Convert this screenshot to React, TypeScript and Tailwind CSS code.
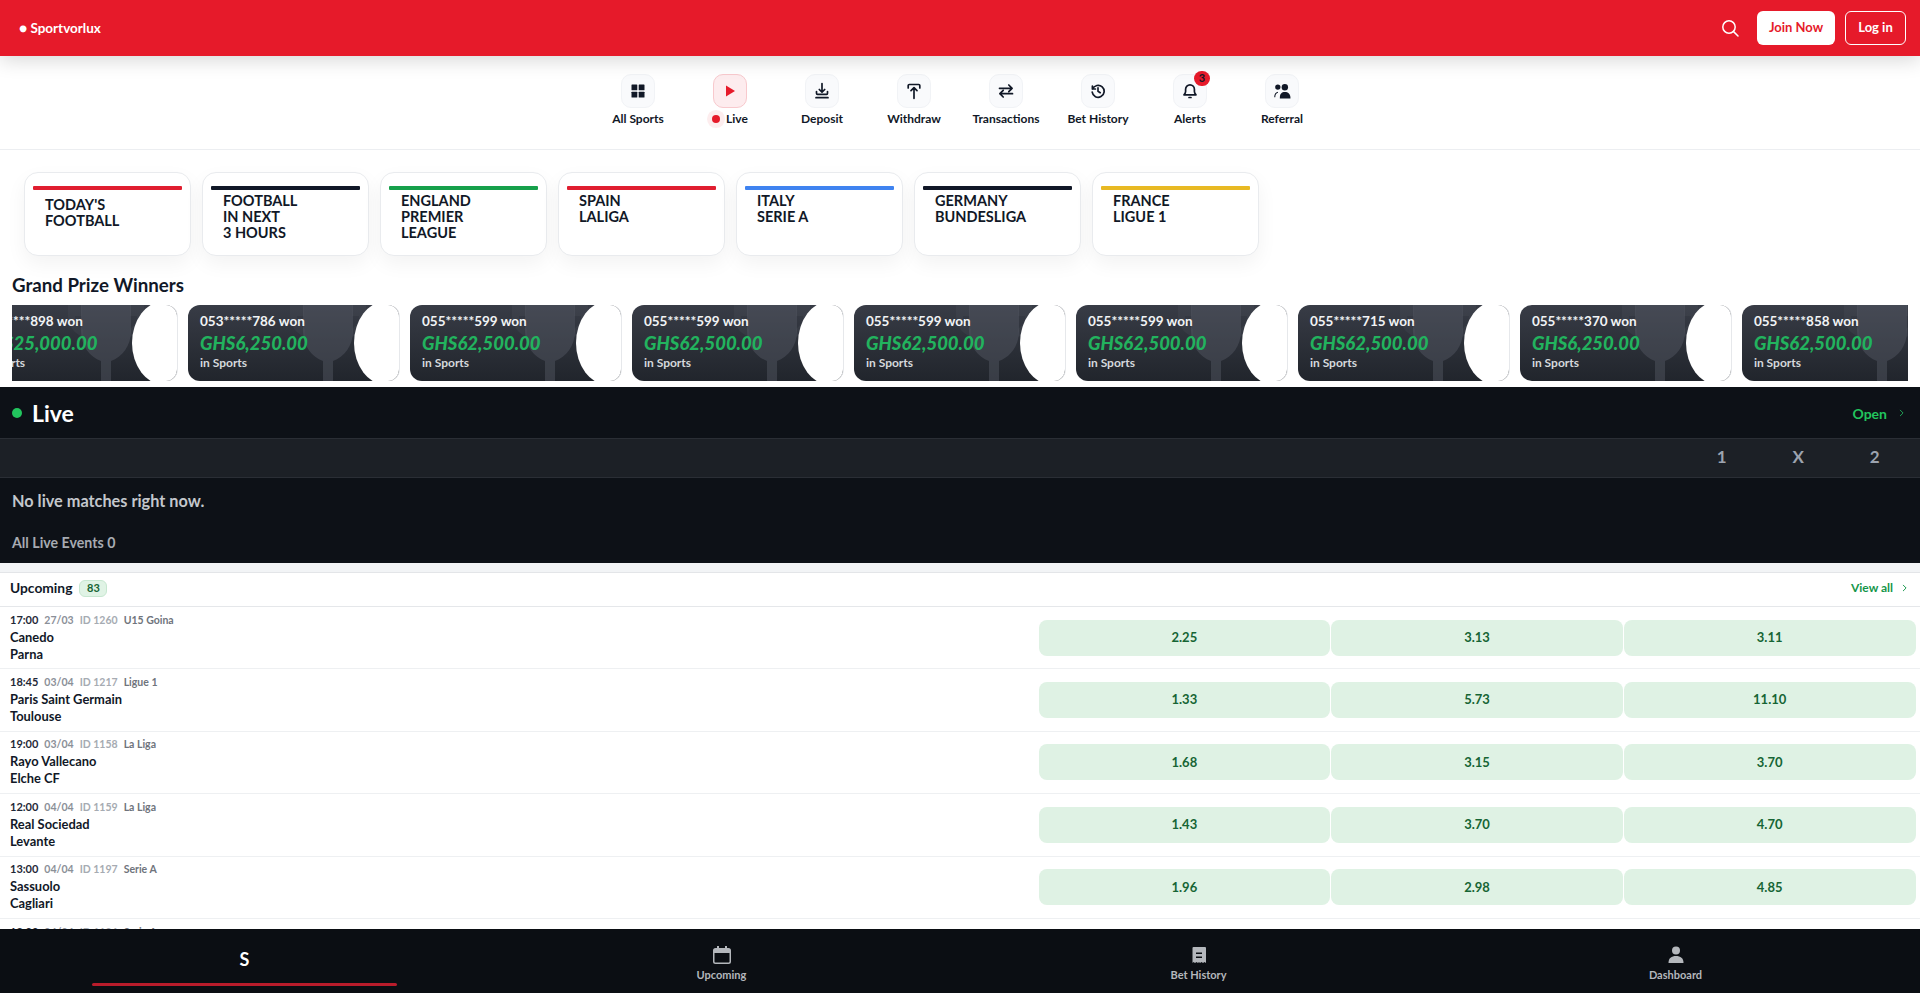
import React from "react";

const font = { fontFamily: "Lato, 'Noto Sans', sans-serif" };

function Grid() {
  return (
    <svg width="14" height="14" viewBox="0 0 14 14" fill="#111827">
      <rect x="0.5" y="0.5" width="5.8" height="5.8" rx="0.6" />
      <rect x="7.7" y="0.5" width="5.8" height="5.8" rx="0.6" />
      <rect x="0.5" y="7.7" width="5.8" height="5.8" rx="0.6" />
      <rect x="7.7" y="7.7" width="5.8" height="5.8" rx="0.6" />
    </svg>
  );
}
function Play() {
  return (
    <svg width="14" height="14" viewBox="0 0 14 14" fill="#e61a2a">
      <path d="M3 1.500v11L12 7z" />
    </svg>
  );
}
const stroke = { fill: "none", stroke: "#111827", strokeWidth: 1.7, strokeLinecap: "round" as const, strokeLinejoin: "round" as const };
function Deposit() {
  return (
    <svg width="18" height="18" viewBox="0 0 18 18" {...stroke}>
      <path d="M9 1.500v8.500M6.300 7.500 9 10.200 11.700 7.500M3.500 9.500v1.700c0 .6.500 1.100 1.100 1.100h9c.6 0 .9-.5.900-1.100V9.500M3 15.700h12" />
    </svg>
  );
}
function Withdraw() {
  return (
    <svg width="18" height="18" viewBox="0 0 18 18" {...stroke}>
      <path d="M3.200 6V3.600c0-.6.500-1.100 1.100-1.100h9.400c.6 0 1.100.5 1.100 1.100V6M9 16.300V5.800M6 8.600 9 5.600l3 3" />
    </svg>
  );
}
function Swap() {
  return (
    <svg width="18" height="18" viewBox="0 0 18 18" {...stroke}>
      <path d="M2.500 6.300h12.600M11.800 3l3.300 3.300-3.300 3.300M15.500 11.700H2.900M6.200 8.400l-3.300 3.300 3.300 3.300" />
    </svg>
  );
}
function History() {
  return (
    <svg width="16" height="16" viewBox="0 0 16 16" {...stroke}>
      <path d="M2.400 3v3h3M2.600 6a6 6 0 1 1-.4 3.200M8 4.800V8.300l2.200 1.400" />
    </svg>
  );
}
function Bell() {
  return (
    <svg width="14" height="16" viewBox="0 0 14 16" {...stroke}>
      <path d="M1 11.800h12c-1-1-1.600-1.600-1.600-3.200V6.200a4.400 4.400 0 0 0-8.800 0v2.400c0 1.600-.6 2.200-1.600 3.200z" />
      <path d="M6 14.500h2" />
    </svg>
  );
}
function People() {
  return (
    <svg className="ml-[1px]" width="17" height="15" viewBox="0 0 16 14" fill="#111827">
      <circle cx="3.600" cy="2.800" r="2.500" />
      <circle cx="10.200" cy="3" r="3" />
      <path d="M5.500 13.500c-.2-4.500 1.800-6 4.700-6 3 0 5.300 1.600 5.300 6z" />
      <path d="M0.700 12.500c0-2.500.9-4.200 3-4.700" fill="none" stroke="#111827" strokeWidth="1" />
    </svg>
  );
}

const navItems = [
  { label: "All Sports", icon: <Grid /> },
  { label: "Live", icon: <Play />, live: true },
  { label: "Deposit", icon: <Deposit /> },
  { label: "Withdraw", icon: <Withdraw /> },
  { label: "Transactions", icon: <Swap /> },
  { label: "Bet History", icon: <History /> },
  { label: "Alerts", icon: <Bell />, badge: "3" },
  { label: "Referral", icon: <People /> },
];

const cards = [
  { lines: ["TODAY'S", "FOOTBALL"], bar: "bg-[#e01e30]", first: true },
  { lines: ["FOOTBALL", "IN NEXT", "3 HOURS"], bar: "bg-[#111827]" },
  { lines: ["ENGLAND", "PREMIER", "LEAGUE"], bar: "bg-[#16a04b]" },
  { lines: ["SPAIN", "LALIGA"], bar: "bg-[#e01e30]" },
  { lines: ["ITALY", "SERIE A"], bar: "bg-[#3f83f0]" },
  { lines: ["GERMANY", "BUNDESLIGA"], bar: "bg-[#111827]" },
  { lines: ["FRANCE", "LIGUE 1"], bar: "bg-[#e8b923]" },
];

const winners = [
  ["055*****898 won", "GHS25,000.00"],
  ["053*****786 won", "GHS6,250.00"],
  ["055*****599 won", "GHS62,500.00"],
  ["055*****599 won", "GHS62,500.00"],
  ["055*****599 won", "GHS62,500.00"],
  ["055*****599 won", "GHS62,500.00"],
  ["055*****715 won", "GHS62,500.00"],
  ["055*****370 won", "GHS6,250.00"],
  ["055*****858 won", "GHS62,500.00"],
];

const matches = [
  ["17:00", "27/03", "ID 1260", "U15 Goina", "Canedo", "Parna", "2.25", "3.13", "3.11"],
  ["18:45", "03/04", "ID 1217", "Ligue 1", "Paris Saint Germain", "Toulouse", "1.33", "5.73", "11.10"],
  ["19:00", "03/04", "ID 1158", "La Liga", "Rayo Vallecano", "Elche CF", "1.68", "3.15", "3.70"],
  ["12:00", "04/04", "ID 1159", "La Liga", "Real Sociedad", "Levante", "1.43", "3.70", "4.70"],
  ["13:00", "04/04", "ID 1197", "Serie A", "Sassuolo", "Cagliari", "1.96", "2.98", "4.85"],
  ["18:00", "04/04", "ID 1196", "Serie A", "Modena", "Parma", "1.96", "2.98", "4.85"],
];

function Trophy() {
  return (
    <svg className="absolute left-[102px] top-0 h-[76px] w-[76px]" viewBox="0 0 76 76">
      <path fill="#565b66" fillOpacity="0.2" d="M0 0h14v11H7v6l8 7v8C5 28 0 20 0 10zM76 0H62v11h7v6l-7 7v8c10-4 14-12 14-22z" />
      <path fill="#565b66" fillOpacity="0.45" d="M13 0h50v26c0 15-9 26-20 30v20H33V56C22 52 13 41 13 26z" />
    </svg>
  );
}

function Chevron({ className }: { className: string }) {
  return (
    <svg className={className} width="5" height="8" viewBox="0 0 6 10" fill="none" stroke="currentColor" strokeWidth="1.200" strokeLinecap="round" strokeLinejoin="round">
      <path d="M1.500 1.500 5 5 1.500 8.500" />
    </svg>
  );
}

export default function App() {
  return (
    <div style={font} className="relative h-[993px] w-full overflow-hidden bg-white text-[#111827]">
      <header className="relative z-10 flex h-14 items-center justify-between bg-[#e61a2a] pl-[19px] pr-[14px] shadow-[0_4px_20px_rgba(0,0,0,0.16)]">
        <div className="text-[13.500px] font-bold text-white">● Sportvorlux</div>
        <div className="flex items-center">
          <svg className="mr-[18px]" width="18" height="18" viewBox="0 0 18 18" fill="none" stroke="#fff" strokeWidth="1.500" strokeLinecap="round">
            <circle cx="8" cy="8" r="6.200" />
            <path d="M12.600 12.600 17 17" />
          </svg>
          <button className="h-[34px] w-[78px] rounded-[6px] bg-white text-[13px] font-bold text-[#e61a2a]">Join Now</button>
          <button className="ml-[10px] h-[34px] w-[61px] rounded-[6px] border border-white text-[13px] font-bold text-white">Log in</button>
        </div>
      </header>

      <nav className="flex h-[94px] justify-center border-b border-[#eceef1] pt-[18px]">
        {navItems.map((n) => (
          <div key={n.label} className="flex w-[92px] flex-col items-center">
            <div className={`relative flex h-[34px] w-[34px] items-center justify-center rounded-[10px] border ${n.live ? "border-[#f8c9cd] bg-[#fdecee]" : "border-[#f1f3f6] bg-[#f9fafc]"}`}>
              {n.icon}
              {n.badge && (
                <span className="absolute right-[-4px] top-[-4px] flex h-[15px] w-[16px] items-center justify-center rounded-full bg-[#e61a2a] text-[11px] font-bold text-[#111827]">{n.badge}</span>
              )}
            </div>
            <div className="mt-[3px] flex h-[16px] items-center text-[12px] font-bold leading-4">
              {n.live && <span className="mr-[6px] h-[8px] w-[8px] rounded-full bg-[#e61a2a] shadow-[0_0_0_5px_rgba(230,26,42,0.08)]" />}
              {n.label}
            </div>
          </div>
        ))}
      </nav>

      <section className="flex h-[118px] gap-[11px] pl-[24px] pt-[22px]">
        {cards.map((c) => (
          <div key={c.lines[0]} className="h-[84px] w-[167px] rounded-[14px] border border-[#e9ebee] bg-white px-[8px] pt-[13px] shadow-[0_8px_20px_rgba(0,0,0,0.05)]">
            <div className={`h-[4px] rounded-[1px] ${c.bar}`} />
            <div className={`pl-[12px] text-[14.500px] font-bold leading-4 ${c.first ? "pt-[7px]" : "pt-[3px]"}`}>
              {c.lines.map((l) => <div key={l}>{l}</div>)}
            </div>
          </div>
        ))}
      </section>

      <h2 className="pl-[12px] pt-[5px] text-[18.700px] font-bold leading-[24px]">Grand Prize Winners</h2>

      <div className="mx-[12px] mt-[8px] h-[76px] overflow-hidden">
        <div className="ml-[-46px] flex gap-[10.200px]">
          {winners.map((w, i) => (
            <div key={i} className="relative h-[76px] w-[211.800px] shrink-0 overflow-hidden rounded-[12px] border-r border-[#e6e8eb] bg-gradient-to-b from-[#383c46] to-[#21252c] pl-[12px]">
              <Trophy />
              <div className="absolute right-[-20px] top-[-4px] h-[84px] w-[65px] rounded-[50%] bg-white" />
              <div className="relative pt-[8px] text-[13.500px] font-bold leading-[16px] text-[#f1f3f5]">{w[0]}</div>
              <div className="relative mt-[1px] text-[18.500px] font-black italic leading-[26px] text-[#22b35e]">{w[1]}</div>
              <div className="relative text-[12px] font-bold leading-[14px] text-[#d5d8dc]">in Sports</div>
            </div>
          ))}
        </div>
      </div>

      <section className="mt-[6px] h-[176px] bg-[#0d1117]">
        <div className="flex h-[51px] items-center justify-between pl-[12px] pr-[16px] pt-[1px]">
          <div className="flex items-center gap-[10px]">
            <span className="h-[10px] w-[10px] rounded-full bg-[#22c55e]" />
            <span className="text-[23px] font-bold text-white">Live</span>
          </div>
          <div className="flex items-center gap-[12px] text-[#22c55e]">
            <span className="text-[14px] font-bold">Open</span>
            <Chevron className="text-[#22a558]" />
          </div>
        </div>
        <div className="flex h-[40px] items-center justify-end border-y border-[#2a2e35] bg-[#1c2026] pb-[3px] pr-[7px] text-[17px] font-bold text-[#9ca3af]">
          <span className="w-[76.500px] text-center">1</span>
          <span className="w-[76.500px] text-center">X</span>
          <span className="w-[76.500px] text-center">2</span>
        </div>
        <div className="pl-[12px] pt-[12px] text-[16.300px] font-bold leading-[22px] text-[#c3c7cc]">No live matches right now.</div>
        <div className="pl-[12px] pt-[21px] text-[14.200px] font-bold leading-[20px] text-[#a7abb2]">All Live Events 0</div>
      </section>

      <div className="h-[10px] border-b border-[#e3e5e8] bg-[#f2f4f6]" />

      <div className="flex h-[34px] items-center justify-between border-b border-[#e5e7ea] pb-[3px] pl-[10px] pr-[13px]">
        <div className="flex items-center">
          <span className="text-[13.800px] font-bold">Upcoming</span>
          <span className="ml-[7px] flex h-[17px] w-[28px] items-center justify-center rounded-[6px] border border-[#c7e7d0] bg-[#e0f3e5] text-[11px] font-bold text-[#166534]">83</span>
        </div>
        <div className="flex items-center gap-[9px] text-[#15964a]">
          <span className="text-[12px] font-bold">View all</span>
          <Chevron className="" />
        </div>
      </div>

      {matches.map((m) => (
        <div key={m[2]} className="flex h-[62.400px] items-center justify-between border-b border-[#eef0f2] pl-[10px] pr-[4.500px]">
          <div>
            <div className="flex items-baseline gap-[6px] text-[10.500px] font-bold leading-[14px]">
              <span className="text-[11px] text-[#1f2937]">{m[0]}</span>
              <span className="text-[#8b9098]">{m[1]}</span>
              <span className="text-[#a6abb2]">{m[2]}</span>
              <span className="text-[#6f747c]">{m[3]}</span>
            </div>
            <div className="mt-[2px] text-[12.900px] font-bold leading-[17px] text-[#111827]">{m[4]}</div>
            <div className="text-[12.900px] font-bold leading-[17px] text-[#111827]">{m[5]}</div>
          </div>
          <div className="flex w-[877px] gap-[1px]">
            {m.slice(6).map((o, i) => (
              <div key={i} className="flex h-[36px] flex-1 items-center justify-center rounded-[8px] bg-[#dff2e4] text-[13px] font-bold text-[#166534]">{o}</div>
            ))}
          </div>
        </div>
      ))}

      <footer className="absolute bottom-0 left-0 right-0 flex h-[64px] bg-[#0b0e13] px-[6px]">
        <div className="relative flex flex-1 items-center justify-center">
          <span className="mt-[-3px] text-[18px] font-bold text-white">S</span>
          <span className="absolute bottom-[7px] left-[86px] h-[3px] w-[305px] rounded-full bg-[#b91c2b]" />
        </div>
        <div className="flex flex-1 flex-col items-center gap-[4px] pt-[17px] text-[11px] font-bold leading-[14px] text-[#b4b7bc]">
          <svg width="18" height="18" viewBox="0 0 18 18" fill="#b4b7bc"><path d="M4 0h2v2h6V0h2v2h1.500A2.500 2.500 0 0 1 18 4.500v11a2.500 2.500 0 0 1-2.500 2.500h-13A2.500 2.500 0 0 1 0 15.500v-11A2.500 2.500 0 0 1 2.500 2H4zM1.500 7v8.500c0 .6.400 1 1 1h13c.6 0 1-.4 1-1V7z" /></svg>
          <span>Upcoming</span>
        </div>
        <div className="flex flex-1 flex-col items-center gap-[4px] pt-[17px] text-[11px] font-bold leading-[14px] text-[#b4b7bc]">
          <svg width="18" height="18" viewBox="0 0 18 18" fill="#b4b7bc"><path fillRule="evenodd" d="M3 1h12a1 1 0 0 1 1 1v15l-1.500-1-1.500 1-1.500-1-1.500 1-1-1-1 1-1.500-1-1.500 1-1.500-1-1 1V2a1 1 0 0 1 1-1zm3 5.500v1.500h6V6.500zm0 4v1.500h6v-1.500z" /></svg>
          <span>Bet History</span>
        </div>
        <div className="flex flex-1 flex-col items-center gap-[4px] pt-[17px] text-[11px] font-bold leading-[14px] text-[#b4b7bc]">
          <svg width="18" height="18" viewBox="0 0 18 18" fill="#b4b7bc"><circle cx="9" cy="4.500" r="4" /><path d="M1.500 17c0-5 3-7 7.500-7s7.500 2 7.500 7z" /></svg>
          <span>Dashboard</span>
        </div>
      </footer>
    </div>
  );
}
